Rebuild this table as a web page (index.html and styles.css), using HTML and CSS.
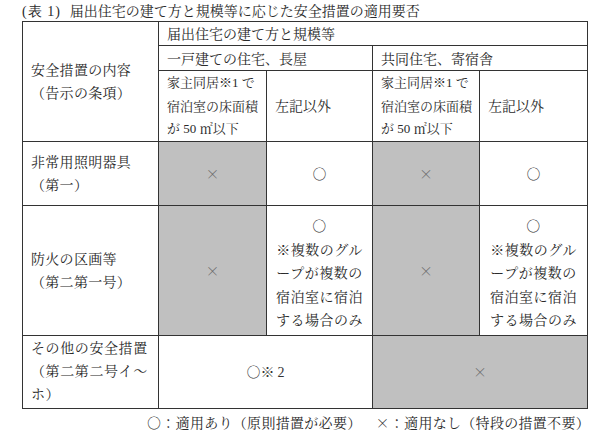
FILE: index.html
```html
<!DOCTYPE html>
<html lang="ja">
<head>
<meta charset="utf-8">
<link rel="stylesheet" href="styles.css">
</head>
<body>
<div class="page">
  <div class="title"><span class="tno">(表 1)</span>届出住宅の建て方と規模等に応じた安全措置の適用要否</div>
  <table class="grid">
    <colgroup><col class="c1"><col class="c2"><col class="c3"><col class="c4"><col class="c5"></colgroup>
    <tr class="r1">
      <td rowspan="3" class="item">安全措置の内容<br>（告示の条項）</td>
      <td colspan="4">届出住宅の建て方と規模等</td>
    </tr>
    <tr class="r2">
      <td colspan="2">一戸建ての住宅、長屋</td>
      <td colspan="2">共同住宅、寄宿舎</td>
    </tr>
    <tr class="r3">
      <td class="sub">家主同居※<span class="num">1</span> で<br>宿泊室の床面積<br>が <span class="num">50</span> ㎡以下</td>
      <td>左記以外</td>
      <td class="sub">家主同居※<span class="num">1</span> で<br>宿泊室の床面積<br>が <span class="num">50</span> ㎡以下</td>
      <td>左記以外</td>
    </tr>
    <tr class="r4">
      <td class="item">非常用照明器具<br>（第一）</td>
      <td class="na">×</td>
      <td class="mark">○</td>
      <td class="na">×</td>
      <td class="mark">○</td>
    </tr>
    <tr class="r5">
      <td class="item">防火の区画等<br>（第二第一号）</td>
      <td class="na">×</td>
      <td class="cond">○<br>※複数のグル<br>ープが複数の<br>宿泊室に宿泊<br>する場合のみ</td>
      <td class="na">×</td>
      <td class="cond">○<br>※複数のグル<br>ープが複数の<br>宿泊室に宿泊<br>する場合のみ</td>
    </tr>
    <tr class="r6">
      <td class="item wide">その他の安全措置<br>（第二第二号イ～<br>ホ）</td>
      <td colspan="2" class="mark">○※<span class="num n2">2</span></td>
      <td colspan="2" class="na">×</td>
    </tr>
  </table>
  <div class="legend"><span class="l1">○：適用あり（原則措置が必要）</span><span class="l2">×：適用なし（特段の措置不要）</span></div>
</div>
</body>
</html>
```

FILE: styles.css
```css
html, body {
  margin: 0;
  padding: 0;
  background: #ffffff;
}
.page {
  width: 600px;
  height: 435px;
  font-family: "Noto Serif CJK JP", "Noto Sans CJK JP", serif;
  color: #2a2a2a;
  font-size: 14px;
}
.title {
  height: 21px;
  line-height: 20px;
  padding-left: 22px;
  white-space: nowrap;
}
.tno {
  font-family: "Liberation Serif", serif;
  letter-spacing: 1px;
  margin-right: 9px;
}
.num {
  font-family: "Liberation Serif", serif;
}
.grid {
  margin-left: 22px;
  border-collapse: collapse;
  table-layout: fixed;
  width: 566px;
}
.c1 { width: 136px; }
.c2 { width: 108px; }
.c3 { width: 106px; }
.c4 { width: 107px; }
.c5 { width: 108px; }
.grid td {
  border: 1px solid #333;
  padding: 0 8px;
  line-height: 23px;
  vertical-align: middle;
  white-space: nowrap;
  overflow: hidden;
}
.r1 { height: 24px; }
.r2 { height: 25px; }
.r3 { height: 70px; }
.r4 { height: 64px; }
.r5 { height: 130px; }
.r6 { height: 73px; }
.grid td.item {
  letter-spacing: 0.3px;
}
.grid td.wide {
  letter-spacing: 0.6px;
  vertical-align: top;
}
.grid td.sub {
  font-size: 13px;
  line-height: 22.5px;
}
.grid td.na {
  background: #c0c0c0;
  text-align: center;
  color: #666;
}
.grid td.mark {
  text-align: center;
  color: #333;
}
.grid td.cond {
  text-align: center;
  padding: 6px 2px 0;
  letter-spacing: 0.5px;
  line-height: 23.5px;
}
.n2 {
  margin-left: 3px;
}
.legend {
  height: 26px;
  line-height: 26px;
  width: 566px;
  margin-left: 22px;
  display: flex;
  justify-content: flex-end;
  white-space: nowrap;
}
.l1, .l2 {
  letter-spacing: 0.3px;
}
.l2 {
  margin-left: 14px;
  margin-right: -2px;
}
```
